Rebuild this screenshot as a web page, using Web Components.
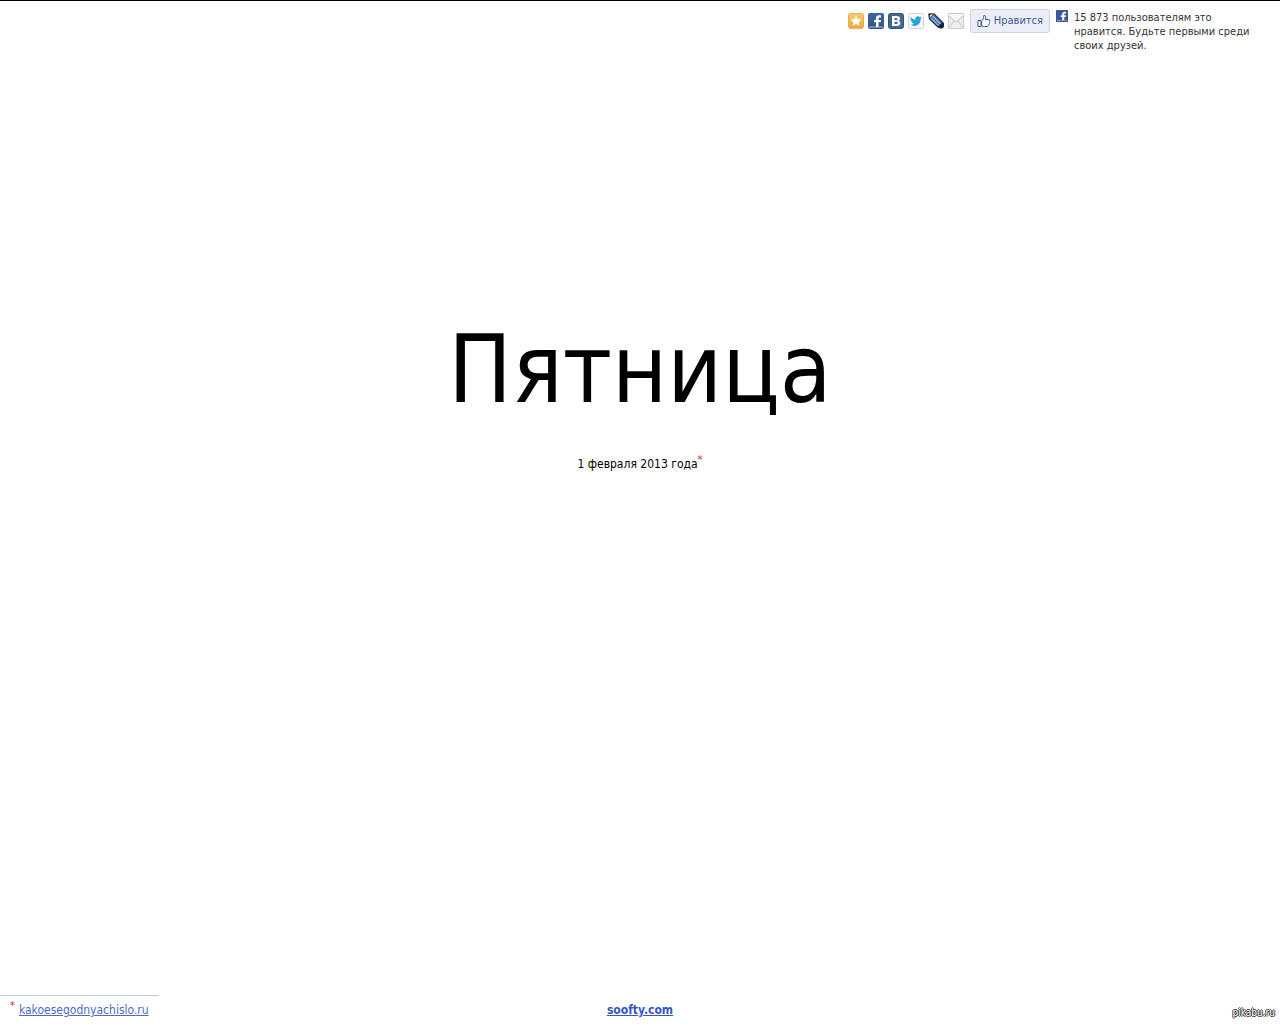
<!DOCTYPE html>
<html lang="ru">
<head>
<meta charset="utf-8">
<title>Какой сегодня день</title>
<style>
body { margin: 0; background: #fff; color: #000; font: 12px/16px "DejaVu Sans Condensed", "DejaVu Sans", sans-serif; }
</style>
</head>
<body>
<day-page>
  <share-bar slot="top">
    <share-link kind="fav" label="В избранное"></share-link>
    <share-link kind="fb" label="Facebook"></share-link>
    <share-link kind="vk" label="ВКонтакте"></share-link>
    <share-link kind="tw" label="Twitter"></share-link>
    <share-link kind="lj" label="LiveJournal"></share-link>
    <share-link kind="mail" label="Почта"></share-link>
    <like-box slot="like">15 873 пользователям это нравится. Будьте первыми среди своих друзей.</like-box>
  </share-bar>
  <day-title date="1 февраля 2013 года">Пятница</day-title>
  <page-footer slot="bottom"></page-footer>
</day-page>
<script>
const ICONS = {
  fav: `<defs><linearGradient id="g" x2="0" y2="1"><stop stop-color="#f6cf74"/><stop offset="1" stop-color="#eea63a"/></linearGradient></defs><rect x=".5" y=".5" width="15" height="15" rx="2" fill="url(#g)" stroke="#e3ad55"/><path d="M8 2.7l1.6 3.5 3.8.4-2.8 2.6.8 3.8L8 11.1 4.6 13l.8-3.8-2.8-2.6 3.8-.4z" fill="#fff"/>`,
  fb: `<defs><linearGradient id="g" x2="0" y2="1"><stop stop-color="#3e669c"/><stop offset="1" stop-color="#315486"/></linearGradient></defs><rect width="16" height="16" rx="2" fill="url(#g)"/><path d="M1 13h14v2H1z" fill="#6d8bb6"/><path d="M8 14V9.300H6V7h2V5.500C8 3.500 9.200 2.300 11.300 2.300H13v2.300h-1.300c-.9 0-1.200.4-1.200 1.200V7H13l-.4 2.300h-2.100V14z" fill="#fff"/>`,
  vk: `<rect x=".5" y=".5" width="15" height="15" rx="2" fill="#3f6990" stroke="#315879"/><path fill="#fff" fill-rule="evenodd" d="M4 3h5c2 0 3 .9 3 2.500 0 1-.5 1.800-1.400 2.200 1.100.3 1.800 1.100 1.800 2.300 0 1.900-1.300 3-3.500 3H4zM6.500 5v1.900h1.700c.8 0 1.200-.3 1.200-1S9 5 8.200 5zm0 3.700V11h2c.8 0 1.300-.4 1.300-1.200 0-.7-.5-1.100-1.300-1.100z"/>`,
  tw: `<rect x=".5" y=".5" width="15" height="15" rx="1" fill="#f8f9fa" stroke="#d3d6d9"/><path d="M2.300 4c1.400 1.600 3 2.400 5 2.500-.3-2 .8-3.300 2.400-3.300.8 0 1.300.3 1.800.8l1.700-.6-.8 1.400 1.400-.3-1.200 1.400c.1 4-2.400 7-6.100 7-1.600 0-2.900-.4-4-1.100 1.300 0 2.400-.3 3.400-1.100-1.200-.2-1.900-.8-2.300-1.700h1C3.200 8.500 2.600 7.700 2.500 6.600l1 .3C2.500 6 2.100 5.100 2.300 4z" fill="#2ea3d8"/>`,
  lj: `<path d="M1 1.200L6.200 1l8.600 8.600c1 1.400 1 3.500-.2 5-1.600.7-3.300.4-4.600-.6L1.400 5.700z" fill="#4977b5" stroke="#17243c" stroke-width="1.200"/><path d="M4.500 3l8 8M2.800 5.100l7.600 7.500" stroke="#96b9df" stroke-width="1.100"/><path d="M1 1l4.800.2-4.300 4z" fill="#f2ead8" stroke="#222b38" stroke-width=".7"/><path d="M1 1l2 .1-1.800 1.800z" fill="#111"/><path d="M10 13.700l4.200-4.200c1.300 1.500 1.500 3.400.3 5-1.600.7-3.100.4-4.500-.8z" fill="#17233e"/>`,
  mail: `<rect x=".5" y=".5" width="15" height="15" rx="1" fill="#eee" stroke="#ccc"/><path d="M1 1h14v2L8 9 1 3z" fill="#fafafa"/><path d="M1 3l7 6 7-6M1.200 14.500L6 8m8.800 6.500L10 8" fill="none" stroke="#c2c2c2"/>`,
};

class ShareLink extends HTMLElement {
  connectedCallback() {
    this.attachShadow({ mode: 'open' }).innerHTML = `
      <style>:host, a, svg { display: block; width: 16px; height: 16px; }</style>
      <a href="#" aria-label="${this.getAttribute('label')}"><svg viewBox="0 0 16 16" aria-hidden="true">${ICONS[this.getAttribute('kind')]}</svg></a>`;
  }
}

class ShareBar extends HTMLElement {
  constructor() {
    super();
    this.attachShadow({ mode: 'open' }).innerHTML = `
      <style>
        :host { display: flex; justify-content: flex-end; align-items: flex-start; gap: 6px; padding: 8px 16px 0; }
        .links { display: flex; gap: 4px; padding-top: 4px; }
      </style>
      <div class="links"><slot></slot></div>
      <slot name="like"></slot>`;
  }
}

class LikeBox extends HTMLElement {
  constructor() {
    super();
    this.attachShadow({ mode: 'open' }).innerHTML = `
      <style>
        :host { display: flex; align-items: flex-start; gap: 6px; font-size: 11px; line-height: 14px; color: #333; }
        button { display: flex; align-items: center; gap: 3px; height: 24px; box-sizing: border-box; margin: 0; padding: 0 6px;
          font: inherit; color: #3b5998; background: #eceef5; border: 1px solid #cad4e7; border-radius: 3px; white-space: nowrap; }
        svg { flex: none; display: block; }
        .f { margin-top: 1px; }
        p { margin: 2px 0 0; width: 190px; }
      </style>
      <button type="button">
        <svg width="14" height="14" viewBox="0 0 14 14" aria-hidden="true"><path d="M1 6.500h3v6H1z" fill="#fff" stroke="#3b5998"/><path d="M4.500 6.800C6 6 6.800 4.300 6.800 1.500c1.800-.4 2.400 1.400 1.500 4h3.500c1.200 0 1.300 1.600.4 1.900.6.600.4 1.400-.2 1.700.4.600.2 1.300-.5 1.600.200 1-.3 1.800-1.300 1.800H7.500c-1.200 0-1.800-.6-3-.6z" fill="#fff" stroke="#3b5998"/></svg>
        <span>Нравится</span>
      </button>
      <svg class="f" width="12" height="12" viewBox="0 0 12 12" aria-hidden="true"><path d="M0 0h12v12H0z" fill="#3b5998"/><path d="M1 10h10v1H1z" fill="#8297c2"/><path d="M6.200 10V7H4.800V5.200h1.400V4.100C6.200 2.600 7.100 1.700 8.700 1.700H10v1.700h-.9c-.7 0-.9.300-.9.900v.9H10L9.700 7H8.200v3z" fill="#fff"/></svg>
      <p><slot></slot></p>`;
  }
}

class DayTitle extends HTMLElement {
  connectedCallback() {
    this.attachShadow({ mode: 'open' }).innerHTML = `
      <style>
        :host { display: flex; flex-direction: column; align-items: center; gap: 30px; text-align: center; }
        h1 { margin: 0; font-size: 94px; line-height: 112px; font-weight: 400; }
        p { margin: 0; display: flex; }
        sup { font-size: 11px; line-height: 8px; color: #d22; }
      </style>
      <h1><slot></slot></h1>
      <p><time datetime="2013-02-01">${this.getAttribute('date')}</time><sup>*</sup></p>`;
  }
}

class PageFooter extends HTMLElement {
  constructor() {
    super();
    this.attachShadow({ mode: 'open' }).innerHTML = `
      <style>
        :host { display: grid; grid-template-columns: 1fr auto 1fr; align-items: start; }
        a { color: #4a6cc4; }
        .note { justify-self: start; display: flex; gap: 4px; padding: 6px 10px; border-top: 1px solid #b9cbd3; }
        sup { font-size: 11px; line-height: 8px; color: #d22; }
        .brand { padding-top: 7px; font-weight: 700; color: #3557c0; }
        .mark { justify-self: end; padding: 10px 5px 0 0; font-size: 10px; color: #fff;
          text-shadow: 1px 0 #333, -1px 0 #333, 0 1px #333, 0 -1px #333; }
      </style>
      <div class="note"><sup>*</sup><a href="#">kakoesegodnyachislo.ru</a></div>
      <a class="brand" href="#">soofty.com</a>
      <span class="mark">pikabu.ru</span>`;
  }
}

class DayPage extends HTMLElement {
  constructor() {
    super();
    this.attachShadow({ mode: 'open' }).innerHTML = `
      <style>
        :host { display: flex; flex-direction: column; min-height: 100vh; box-sizing: border-box; border-top: 1px solid #000; }
        main { flex: 1; display: flex; flex-direction: column; }
        main::before { content: ""; flex: 1; }
        main::after { content: ""; flex: 2; }
      </style>
      <header><slot name="top"></slot></header>
      <main><slot></slot></main>
      <footer><slot name="bottom"></slot></footer>`;
  }
}

customElements.define('share-link', ShareLink);
customElements.define('share-bar', ShareBar);
customElements.define('like-box', LikeBox);
customElements.define('day-title', DayTitle);
customElements.define('page-footer', PageFooter);
customElements.define('day-page', DayPage);
</script>
</body>
</html>
